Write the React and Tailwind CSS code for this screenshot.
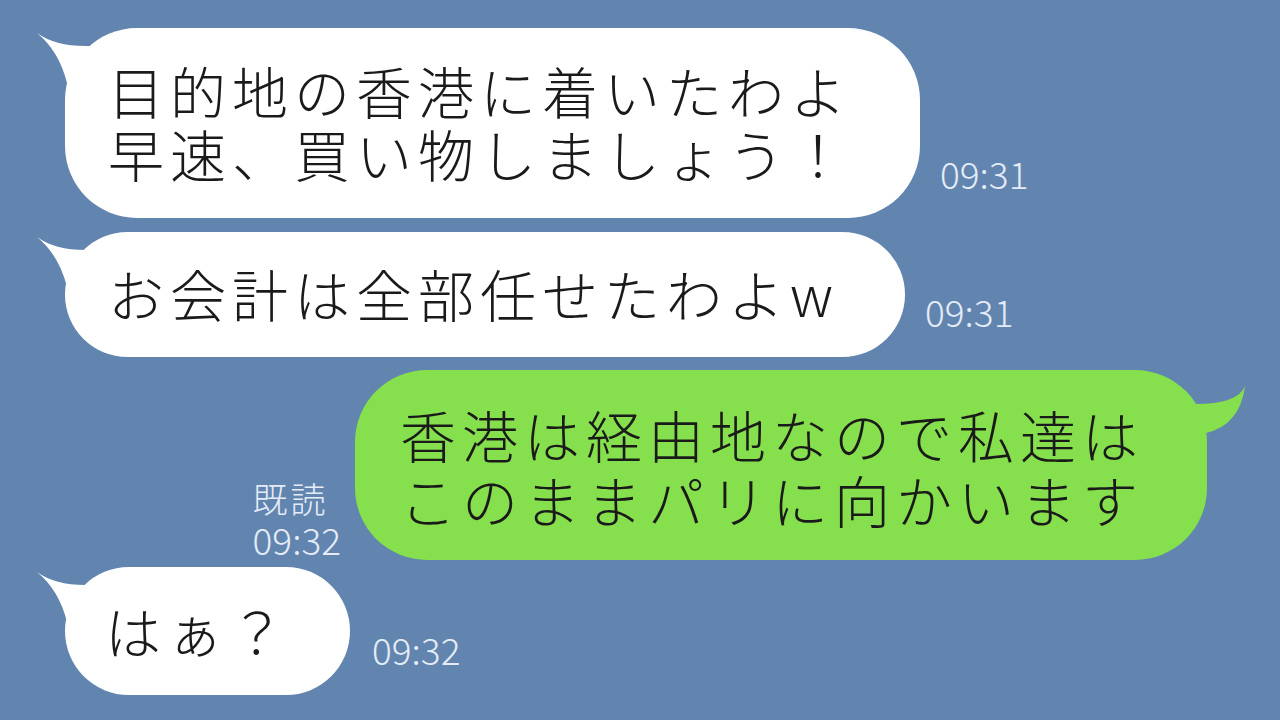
import React from 'react';

const jp = {
  fontFamily:
    '"Noto Sans CJK JP Light", "Noto Sans CJK JP DemiLight", "Noto Sans CJK JP", "Noto Sans", sans-serif',
};

// tail on the left of incoming (white) bubbles
const LeftTail = () => (
  <svg className="absolute left-[-35px] top-[-3px]" width="70" height="80" viewBox="0 0 70 80">
    <path d="M7 8 Q25 21 55 21 L60 21 L60 75 L37 75 L37 58 Q29 26 7 8 Z" fill="#ffffff" />
  </svg>
);

// tail on the right of outgoing (green) bubble
const RightTail = () => (
  <svg className="absolute right-[-45px] top-[10px]" width="60" height="70" viewBox="0 0 60 70">
    <path d="M53 6 Q46 24 3 24 L0 24 L0 70 L14 70 L14 53 Q48 45 53 6 Z" fill="#86df4c" />
  </svg>
);

const Time = ({ children, className = '' }) => (
  <div className={`text-[37px] leading-[36px] font-light text-[#e4ecf7] ${className}`}>{children}</div>
);

export default function App() {
  return (
    <div style={jp} className="w-[1280px] h-[720px] overflow-hidden bg-[#6285b0] flex flex-col">
      {/* row 1 */}
      <div className="flex items-end mt-[28px] ml-[65px]">
        <div className="relative w-[855px] h-[190px] rounded-[72px] bg-white flex flex-col justify-center pl-[43px] pb-[4px] text-[56px] leading-[63px] tracking-[6px] font-light text-[#1a1a1a]">
          <LeftTail />
          <span className="relative">目的地の香港に着いたわよ</span>
          <span className="relative">早速、買い物しましょう！</span>
        </div>
        <Time className="ml-[20px] mb-[27px]">09:31</Time>
      </div>

      {/* row 2 */}
      <div className="flex items-end mt-[14px] ml-[65px]">
        <div className="relative w-[840px] h-[125px] rounded-[64px] bg-white flex flex-col justify-center pl-[43px] pb-[4px] text-[56px] leading-[63px] tracking-[6px] font-light text-[#1a1a1a]">
          <LeftTail />
          <span className="relative">お会計は全部任せたわよw</span>
        </div>
        <Time className="ml-[20px] mb-[28px]">09:31</Time>
      </div>

      {/* row 3 */}
      <div className="flex items-end justify-end mt-[13px] pr-[73px]">
        <div className="mr-[14px] mb-[2px] text-[#e4ecf7] font-light">
          <div className="text-[35px] leading-[44px] tracking-[3px]">既読</div>
          <div className="text-[37px] leading-[38px]">09:32</div>
        </div>
        <div className="relative w-[852px] h-[190px] rounded-[72px] bg-[#86df4c] flex flex-col justify-center pl-[45px] pt-[2px] text-[56px] leading-[65px] tracking-[6px] font-light text-[#1a1a1a]">
          <RightTail />
          <span className="relative">香港は経由地なので私達は</span>
          <span className="relative">このままパリに向かいます</span>
        </div>
      </div>

      {/* row 4 */}
      <div className="flex items-end mt-[7px] ml-[65px]">
        <div className="relative w-[285px] h-[128px] rounded-[64px] bg-white flex flex-col justify-center pl-[40px] pb-[4px] text-[56px] leading-[63px] tracking-[6px] font-light text-[#1a1a1a]">
          <LeftTail />
          <span className="relative">はぁ？</span>
        </div>
        <Time className="ml-[22px] mb-[28px]">09:32</Time>
      </div>
    </div>
  );
}
